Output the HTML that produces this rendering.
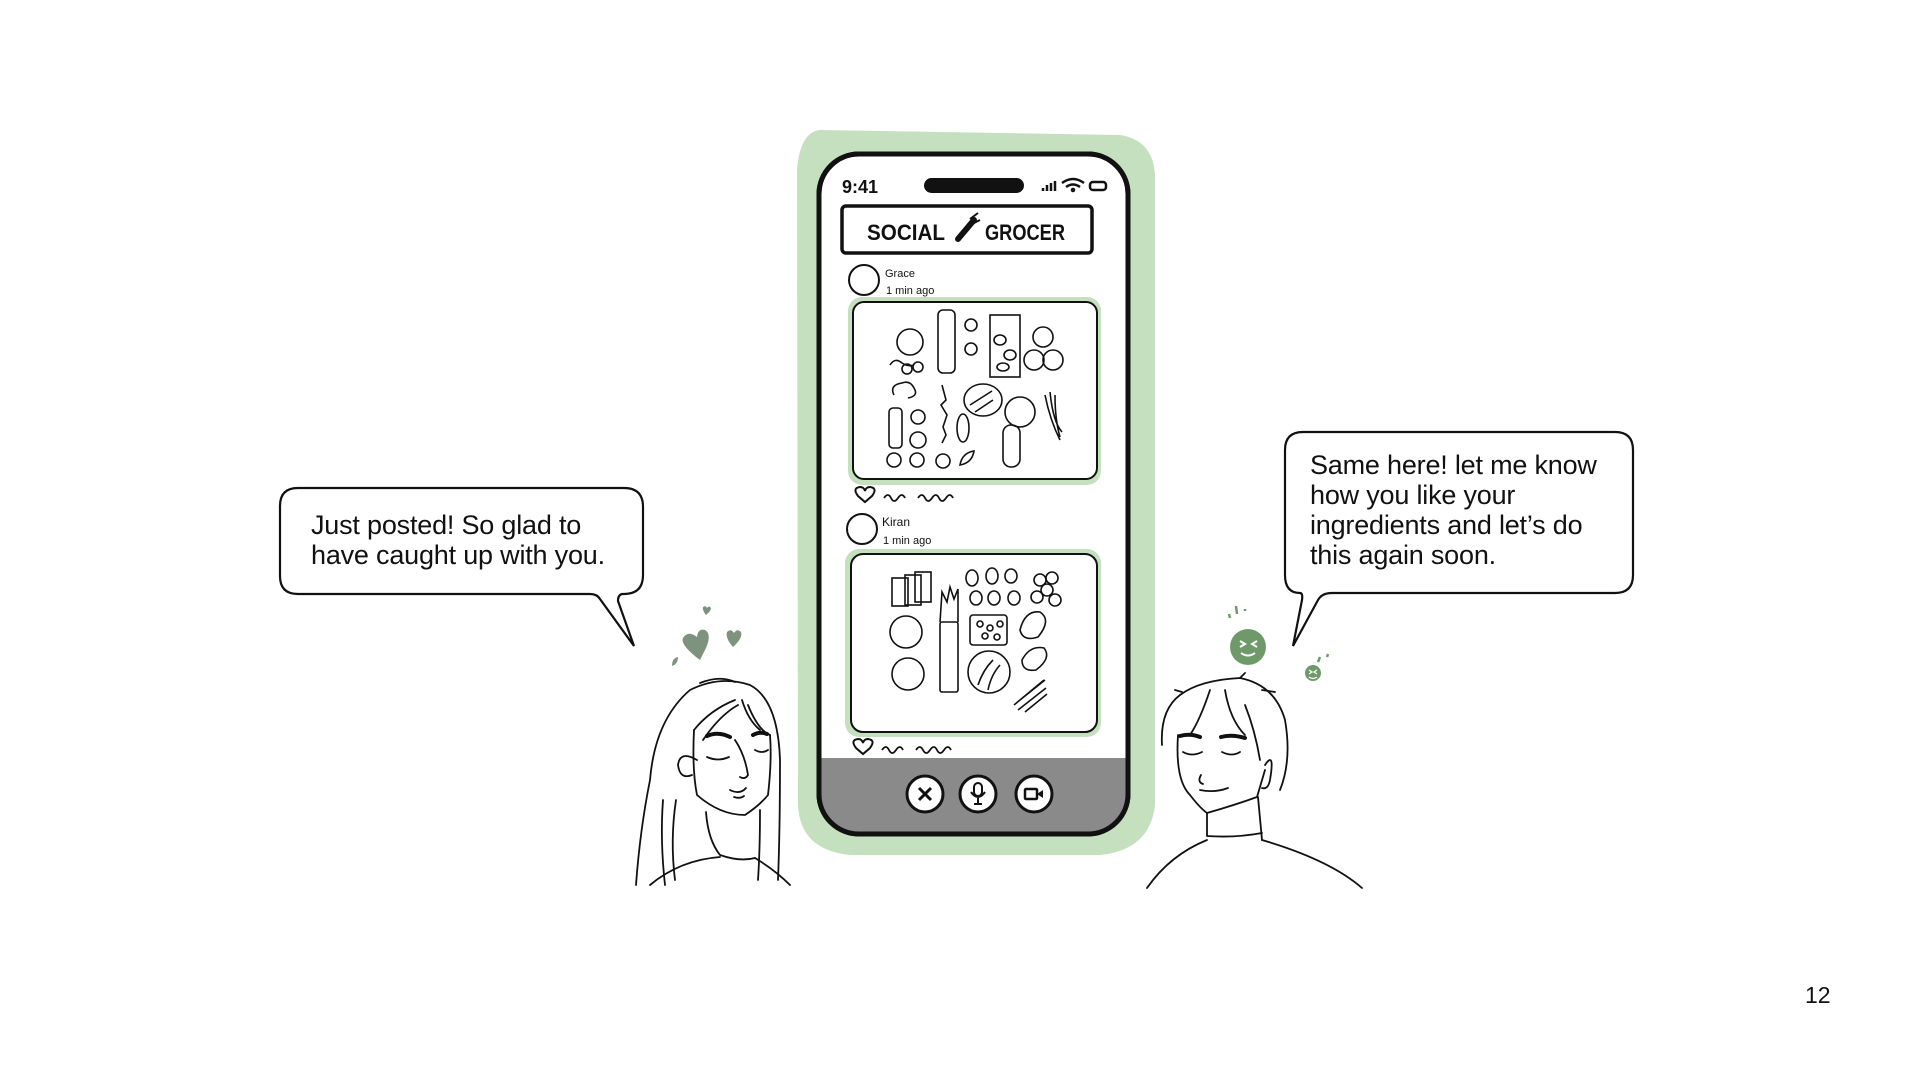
<!DOCTYPE html>
<html><head><meta charset="utf-8"><style>
html,body{margin:0;padding:0;background:#fff;width:1920px;height:1080px;overflow:hidden}
svg{display:block}
.t{font-family:"Liberation Sans",sans-serif;font-size:27px;fill:#111;letter-spacing:-0.2px}
.h{font-family:"Liberation Sans",sans-serif;fill:#111}
</style></head><body>
<svg width="1920" height="1080" viewBox="0 0 1920 1080" xmlns="http://www.w3.org/2000/svg">
<path d="M820 130 L1120 135 Q1153 140 1155 175 L1155 805 Q1150 850 1100 855 L850 855 Q800 850 798 805 L797 170 Q800 132 820 130Z" fill="#c5e0be"/>
<rect x="819" y="154" width="309" height="680" rx="40" fill="#fff" stroke="#111" stroke-width="5"/>
<path d="M821 758 L1126 758 L1126 795 Q1126 832 1088 832 L858 832 Q821 832 821 795Z" fill="#8a8a8a"/>
<rect x="819" y="154" width="309" height="680" rx="40" fill="none" stroke="#111" stroke-width="5"/>
<text x="842" y="193" class="h" font-size="18" font-weight="bold">9:41</text>
<rect x="924" y="178" width="100" height="15" rx="7.5" fill="#111"/>
<g stroke="#111" stroke-width="2.5" fill="none">
<path d="M1043 191v-3M1047 191v-6M1051 191v-8M1055 191v-10"/>
<path d="M1062 183q11-8 22 0M1066 187q7-5 14 0"/><circle cx="1073" cy="190" r="1"/>
<rect x="1090" y="182" width="16" height="8" rx="3"/>
</g>
<rect x="842" y="206" width="250" height="47" rx="4" fill="#fff" stroke="#111" stroke-width="3.5"/>
<text x="867" y="240" class="h" font-size="22" font-weight="bold" textLength="78" lengthAdjust="spacingAndGlyphs">SOCIAL</text>
<path d="M958 239 L974 220" stroke="#111" stroke-width="6" stroke-linecap="round"/>
<path d="M970 219l8-6M974 223l6-3" stroke="#111" stroke-width="2"/>
<text x="985" y="240" class="h" font-size="22" font-weight="bold" textLength="80" lengthAdjust="spacingAndGlyphs">GROCER</text>
<circle cx="864" cy="280" r="15" fill="none" stroke="#111" stroke-width="2"/>
<text x="885" y="277" class="h" font-size="11">Grace</text>
<text x="886" y="294" class="h" font-size="11">1 min ago</text>
<rect x="848" y="297" width="253" height="188" rx="14" fill="#c5e0be"/>
<rect x="853" y="302" width="244" height="177" rx="11" fill="#fff" stroke="#111" stroke-width="2"/>
<g fill="none" stroke="#111" stroke-width="1.6">
<circle cx="910" cy="342" r="13"/><rect x="938" y="310" width="17" height="63" rx="5"/>
<circle cx="971" cy="325" r="6"/><circle cx="971" cy="349" r="6"/>
<rect x="990" y="315" width="30" height="62"/><ellipse cx="1000" cy="340" rx="6" ry="5"/><ellipse cx="1010" cy="355" rx="6" ry="5"/><ellipse cx="1003" cy="367" rx="6" ry="4"/>
<circle cx="1043" cy="337" r="10"/><circle cx="1034" cy="360" r="10"/><circle cx="1053" cy="360" r="10"/>
<path d="M890 365q5-8 12-2 6 4 12 2"/><circle cx="907" cy="369" r="5"/><circle cx="918" cy="367" r="5"/>
<path d="M894 395q-5-10 8-12 8-3 12 5 5 8-6 10"/>
<rect x="889" y="408" width="13" height="40" rx="4"/><circle cx="918" cy="417" r="7"/><circle cx="918" cy="440" r="8"/>
<path d="M942 385l4 15-5 5 6 10-4 12 3 8-4 8"/>
<ellipse cx="983" cy="400" rx="19" ry="16"/><path d="M970 405l22-14M975 412l18-12"/>
<circle cx="1020" cy="412" r="15"/><path d="M1045 395q5 25 15 45M1050 392q3 30 12 40M1055 395q0 25 5 42"/>
<ellipse cx="963" cy="428" rx="6" ry="14"/><rect x="1003" y="425" width="17" height="42" rx="8"/>
<circle cx="894" cy="460" r="7"/><circle cx="917" cy="460" r="7"/><circle cx="943" cy="461" r="7"/><path d="M960 465q2-12 14-14-2 12-14 14z"/>
</g>
<path d="M858 496q-6-8 2-9 4 0 5 4 1-4 5-4 8 1 2 9l-7 6z" fill="none" stroke="#111" stroke-width="2"/>
<path d="M884 498q4-6 7 0t7 0 7 0M918 498q4-6 7 0t7 0 7 0 7 0 7 0" fill="none" stroke="#111" stroke-width="1.8"/>
<circle cx="862" cy="529" r="15" fill="none" stroke="#111" stroke-width="2"/>
<text x="882" y="526" class="h" font-size="12">Kiran</text>
<text x="883" y="544" class="h" font-size="11">1 min ago</text>
<rect x="845" y="549" width="256" height="188" rx="14" fill="#c5e0be"/>
<rect x="851" y="554" width="246" height="178" rx="12" fill="#fff" stroke="#111" stroke-width="2"/>
<g fill="none" stroke="#111" stroke-width="1.6">
<rect x="892" y="578" width="16" height="28"/><rect x="905" y="575" width="16" height="30"/><rect x="915" y="572" width="16" height="30"/>
<circle cx="906" cy="632" r="16"/><circle cx="908" cy="674" r="16"/>
<rect x="940" y="622" width="18" height="70" rx="2"/><path d="M940 622l2-30 5 10 3-15 4 12 4-10v33"/>
<ellipse cx="972" cy="578" rx="6" ry="8"/><ellipse cx="992" cy="576" rx="6" ry="8"/><ellipse cx="1011" cy="576" rx="6" ry="7"/>
<ellipse cx="976" cy="598" rx="6" ry="7"/><ellipse cx="994" cy="598" rx="6" ry="7"/><ellipse cx="1014" cy="598" rx="6" ry="7"/>
<rect x="970" y="615" width="37" height="30" rx="3"/><circle cx="980" cy="624" r="3"/><circle cx="990" cy="628" r="3"/><circle cx="1000" cy="624" r="3"/><circle cx="985" cy="636" r="3"/><circle cx="997" cy="637" r="3"/>
<circle cx="989" cy="672" r="21"/><path d="M978 685q5-15 15-25M988 690q3-15 12-25"/>
<path d="M1020 630q5-20 20-18 12 8-2 25-15 5-18-7z"/><path d="M1022 660q8-15 22-12 8 10-8 22-14 2-14-10z"/>
<circle cx="1040" cy="580" r="6"/><circle cx="1052" cy="578" r="6"/><circle cx="1047" cy="590" r="6"/><circle cx="1037" cy="597" r="6"/><circle cx="1055" cy="600" r="6"/>
<path d="M1014 705l30-25M1018 710l28-22M1020 700l25-20M1025 712l22-18"/>
</g>
<path d="M856 748q-6-8 2-9 4 0 5 4 1-4 5-4 8 1 2 9l-7 6z" fill="none" stroke="#111" stroke-width="2"/>
<path d="M882 750q4-6 7 0t7 0 7 0M916 750q4-6 7 0t7 0 7 0 7 0 7 0" fill="none" stroke="#111" stroke-width="1.8"/>
<g fill="#fff" stroke="#111" stroke-width="3">
<circle cx="925" cy="794" r="18"/><circle cx="978" cy="794" r="18"/><circle cx="1034" cy="794" r="18"/>
</g>
<path d="M919 788l12 12M931 788l-12 12" stroke="#111" stroke-width="3"/>
<rect x="974" y="783" width="8" height="13" rx="4" fill="none" stroke="#111" stroke-width="2"/>
<path d="M971 792q7 10 14 0M978 798v6M974 804h8" fill="none" stroke="#111" stroke-width="2"/>
<rect x="1025" y="789" width="12" height="10" rx="1" fill="none" stroke="#111" stroke-width="2.5"/>
<path d="M1037 794l6-4v8z" fill="#111"/>
<!-- left bubble -->
<path d="M298 488 L624 488 Q643 488 643 507 L643 575 Q643 594 624 594 L622 594 Q618 595 618 601 L634 646 L600 599 Q597 594 590 594 L298 594 Q280 594 280 576 L280 506 Q280 488 298 488Z" fill="#fff" stroke="#111" stroke-width="2.2"/>
<text x="311" y="534" class="t">Just posted! So glad to</text>
<text x="311" y="564" class="t">have caught up with you.</text>
<!-- right bubble -->
<path d="M1303 432 L1615 432 Q1633 432 1633 450 L1633 575 Q1633 593 1615 593 L1332 593 Q1322 593 1318 600 L1293 646 L1302 600 Q1303 593 1300 593 Q1285 593 1285 575 L1285 450 Q1285 432 1303 432Z" fill="#fff" stroke="#111" stroke-width="2.2"/>
<text x="1310" y="474" class="t">Same here! let me know</text>
<text x="1310" y="504" class="t">how you like your</text>
<text x="1310" y="534" class="t">ingredients and let’s do</text>
<text x="1310" y="564" class="t">this again soon.</text>
<g fill="#7e937d">
<path d="M700 660 Q680 645 683 638 Q688 630 697 637 Q698 628 705 630 Q712 634 706 648Z"/>
<path d="M733 647 Q725 638 727 632 Q731 628 734 633 Q737 628 741 632 Q743 638 733 647Z"/>
<path d="M706 615 Q702 610 703 607 Q706 605 707 608 Q709 605 711 608 Q711 611 706 615Z"/>
<path d="M672 666 Q672 658 678 657 Q678 664 672 666Z"/>
</g>
<g fill="#6d9a68">
<circle cx="1248" cy="647" r="18"/><circle cx="1313" cy="673" r="8"/>
<path d="M1229 614l1 4M1236 606l1 8M1245 609l0 2M1320 657l-2 5M1328 654l-1 3" stroke="#6d9a68" stroke-width="2.5"/>
</g>
<path d="M1240 641l5 3-5 3M1257 641l-5 3 5 3M1241 653q7 5 14 0" fill="none" stroke="#fff" stroke-width="2"/>
<path d="M1309 670l3 2-3 2M1317 670l-3 2 3 2M1309 677q4 3 8 0" fill="none" stroke="#fff" stroke-width="1.3"/>
<g fill="none" stroke="#111" stroke-width="1.8" stroke-linecap="round">
<path d="M636 885 Q640 830 650 780 Q655 720 690 690 Q720 675 750 685 Q778 700 780 760 Q780 830 778 880"/>
<path d="M700 683 Q720 675 735 682"/>
<path d="M694 730 Q710 710 735 700 M703 740 Q720 715 738 705 M742 700 Q748 720 760 730 M748 705 Q758 730 770 735"/>
<path d="M694 730 Q692 770 697 795 Q720 815 745 815 Q760 805 768 795 Q772 760 770 735"/>
<path d="M697 760 Q680 750 678 765 Q680 780 692 775"/>
<path d="M663 800 Q660 840 665 885 M676 800 Q670 840 675 880 M760 810 Q760 850 758 880"/>
<path d="M735 740 Q745 755 748 775 Q745 780 740 777"/>
<path d="M730 790 Q740 795 746 788 M734 797 Q740 799 744 796"/>
<path d="M707 757 Q718 762 729 757 M755 750 Q762 754 768 750"/>
<path d="M706 812 Q708 840 720 855 Q740 862 755 858 M650 885 Q680 860 720 857"/>
<path d="M755 858 Q775 870 790 885"/>
</g>
<path d="M707 736 Q718 731 730 737 M753 735 Q760 731 767 734" stroke="#111" stroke-width="4" fill="none" stroke-linecap="round"/>
<g fill="none" stroke="#111" stroke-width="1.8" stroke-linecap="round">
<path d="M1162 745 Q1160 710 1180 695 Q1200 680 1240 678 Q1275 685 1285 720 Q1292 760 1280 790"/>
<path d="M1182 692 L1175 690 M1240 678 L1245 673 M1262 690 L1275 692"/>
<path d="M1210 690 Q1200 720 1190 735 M1225 690 Q1230 720 1245 735 M1245 705 Q1255 730 1260 760"/>
<path d="M1178 735 Q1175 780 1190 795 Q1200 808 1207 813 Q1235 805 1257 797 Q1262 780 1265 770"/>
<path d="M1265 765 Q1275 750 1270 780 Q1268 790 1262 788"/>
<path d="M1201 775 Q1197 782 1203 784"/>
<path d="M1200 790 Q1215 793 1228 788"/>
<path d="M1183 752 Q1192 757 1202 752 M1222 752 Q1232 757 1240 752"/>
<path d="M1207 813 L1207 836 M1258 797 L1262 840 M1207 836 Q1235 838 1262 833"/>
<path d="M1147 888 Q1170 855 1207 840 M1262 840 Q1330 860 1362 888"/>
</g>
<path d="M1180 736 Q1190 733 1200 737 M1221 737 Q1232 734 1245 738" stroke="#111" stroke-width="4" fill="none" stroke-linecap="round"/>
<text x="1805" y="1003" class="h" font-size="23">12</text>
</svg>
</body></html>
